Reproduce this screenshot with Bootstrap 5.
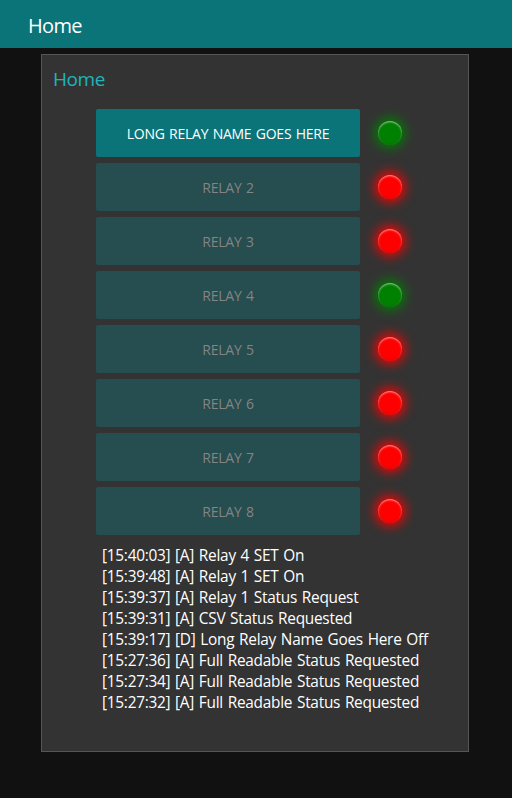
<!DOCTYPE html>
<html lang="en">
<head>
<meta charset="utf-8">
<meta name="viewport" content="width=device-width, initial-scale=1">
<title>Home</title>
<link href="https://cdn.jsdelivr.net/npm/bootstrap@5.3.0/dist/css/bootstrap.min.css" rel="stylesheet">
<style>
body{background:#111;color:#fff;font-family:"Open Sans","Noto Sans",sans-serif;min-height:798px}
.topbar{height:48px;background:#0a7479;padding:3px 28px 0}
.topbar .navbar-brand{font-size:20px;line-height:28px;color:#fff;letter-spacing:-.7px}
.panel{width:428px;height:698px;margin:6px 0 0 41px;background:#333;border-color:#555}
.panel-title{font-size:19px;line-height:26px;color:#1bb5bb;margin:11px 0 17px 11px;letter-spacing:-.45px}
.relays{gap:6px;margin-left:54px}
.relay-btn{width:264px;height:48px;border-radius:2px;font-size:14px;letter-spacing:-.25px;word-spacing:1px;--bs-btn-color:#fff;--bs-btn-bg:#0a7479;--bs-btn-hover-color:#fff;--bs-btn-hover-bg:#0c8288;--bs-btn-disabled-color:#848484;--bs-btn-disabled-bg:#264d4f;--bs-btn-disabled-opacity:1}
.led{width:24px;height:24px;margin-left:18px;background:red;box-shadow:0 0 12px 3px red,inset 0 1px 2px rgba(255,255,255,.6),inset 0 -1px 2px rgba(0,0,0,.15)}
.led-on{background:green;box-shadow:0 0 12px 3px green,inset 0 1px 2px rgba(255,255,255,.6),inset 0 -1px 2px rgba(0,0,0,.15)}
.log{margin:10px 0 0 60px;font-size:15.4px;line-height:21px;letter-spacing:-.26px;word-spacing:1px;white-space:nowrap}
</style>
<script src="https://cdn.jsdelivr.net/npm/bootstrap@5.3.0/dist/js/bootstrap.bundle.min.js"></script>
</head>
<body>
<nav class="navbar topbar"><span class="navbar-brand p-0 m-0">Home</span></nav>
<main class="card panel rounded-0">
<h1 class="panel-title fw-normal">Home</h1>
<div class="relays d-flex flex-column">
<div class="d-flex align-items-center"><button class="btn relay-btn border-0 p-0 text-uppercase">Long Relay Name Goes Here</button><span class="led led-on rounded-circle"></span></div>
<div class="d-flex align-items-center"><button class="btn relay-btn border-0 p-0 text-uppercase" disabled>Relay 2</button><span class="led rounded-circle"></span></div>
<div class="d-flex align-items-center"><button class="btn relay-btn border-0 p-0 text-uppercase" disabled>Relay 3</button><span class="led rounded-circle"></span></div>
<div class="d-flex align-items-center"><button class="btn relay-btn border-0 p-0 text-uppercase" disabled>Relay 4</button><span class="led led-on rounded-circle"></span></div>
<div class="d-flex align-items-center"><button class="btn relay-btn border-0 p-0 text-uppercase" disabled>Relay 5</button><span class="led rounded-circle"></span></div>
<div class="d-flex align-items-center"><button class="btn relay-btn border-0 p-0 text-uppercase" disabled>Relay 6</button><span class="led rounded-circle"></span></div>
<div class="d-flex align-items-center"><button class="btn relay-btn border-0 p-0 text-uppercase" disabled>Relay 7</button><span class="led rounded-circle"></span></div>
<div class="d-flex align-items-center"><button class="btn relay-btn border-0 p-0 text-uppercase" disabled>Relay 8</button><span class="led rounded-circle"></span></div>
</div>
<ul class="log list-unstyled">
<li>[15:40:03] [A] Relay 4 SET On</li>
<li>[15:39:48] [A] Relay 1 SET On</li>
<li>[15:39:37] [A] Relay 1 Status Request</li>
<li>[15:39:31] [A] CSV Status Requested</li>
<li>[15:39:17] [D] Long Relay Name Goes Here Off</li>
<li>[15:27:36] [A] Full Readable Status Requested</li>
<li>[15:27:34] [A] Full Readable Status Requested</li>
<li>[15:27:32] [A] Full Readable Status Requested</li>
</ul>
</main>
</body>
</html>
